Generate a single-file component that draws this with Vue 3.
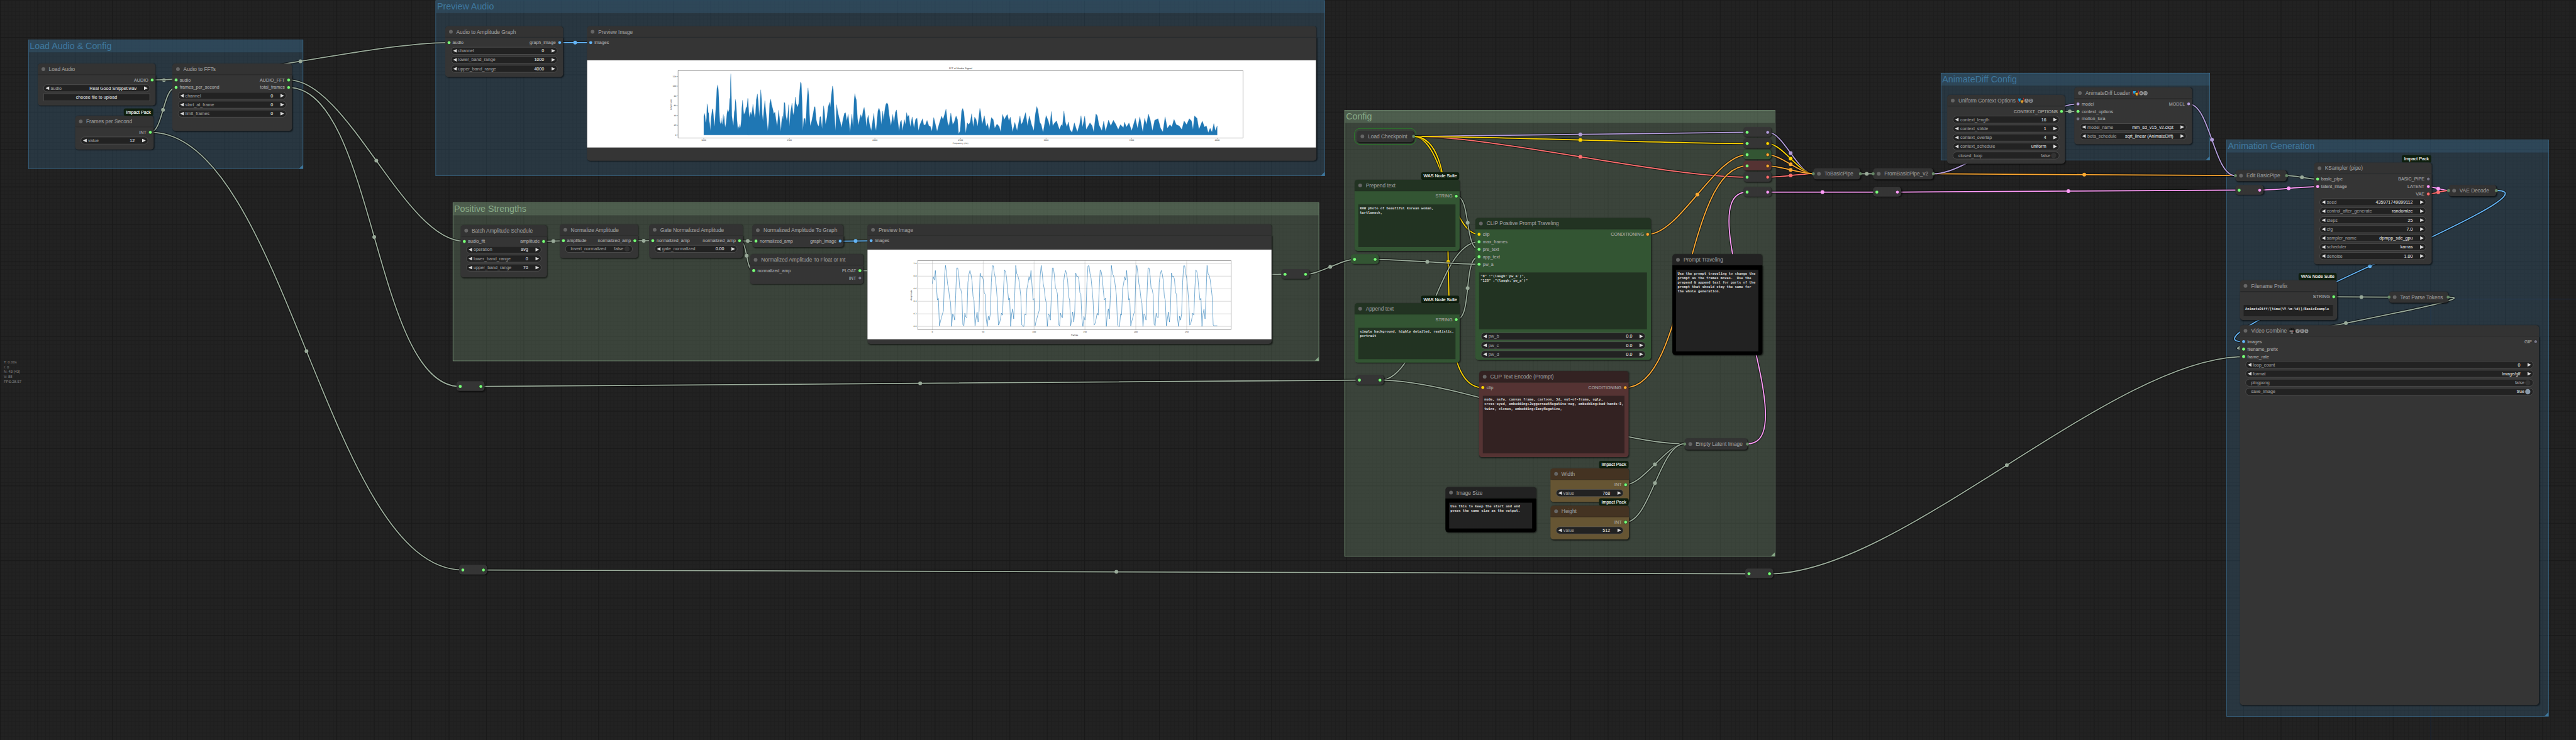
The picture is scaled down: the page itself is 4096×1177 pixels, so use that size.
<script setup>
const C = {
  any: '#7f7', off: '#778', link: '#9aab9a', image: '#64b5f6', clip: '#ffd500',
  model: '#b39ddb', vae: '#ff6e6e', latent: '#ff9cf9', cond: '#ffa931',
}

const groups = [
  { title: 'Load Audio & Config', x: 75.5, y: 106, w: 735, h: 346, color: '#3f789e' },
  { title: 'Preview Audio', x: 1165, y: 1, w: 2379, h: 470, color: '#3f789e' },
  { title: 'Positive Strengths', x: 1210.5, y: 542, w: 2317, h: 424, color: '#88aa88' },
  { title: 'Config', x: 3596, y: 295, w: 1152, h: 1194, color: '#88aa88' },
  { title: 'AnimateDiff Config', x: 5191, y: 195, w: 720, h: 234, color: '#3f789e' },
  { title: 'Animation Generation', x: 5955, y: 374, w: 862, h: 1543, color: '#3f789e' },
]

const num = (label, value) => ({ kind: 'num', label, value })
const toggle = (label, on) => ({ kind: 'toggle', label, value: on ? 'true' : 'false', on })
const inp = (label, color = C.any) => ({ label, color })
const out = inp

const nodes = {
  load: { title: 'Load Audio', x: 100.5, y: 200, w: 315, h: 82, outs: [out('AUDIO')],
    widgets: [num('audio', 'Real Good Snippet.wav'), { kind: 'button', label: 'choose file to upload' }] },
  fps: { title: 'Frames per Second', x: 200.5, y: 340, w: 210, h: 60, badge: 'Impact Pack', outs: [out('INT')],
    widgets: [num('value', '12')] },
  fft: { title: 'Audio to FFTs', x: 460.5, y: 200, w: 320, h: 150, ins: [inp('audio'), inp('frames_per_second')],
    outs: [out('AUDIO_FFT'), out('total_frames')],
    widgets: [num('channel', '0'), num('start_at_frame', '0'), num('limit_frames', '0')] },
  ampGraph: { title: 'Audio to Amplitude Graph', x: 1190.5, y: 100, w: 315, h: 106, ins: [inp('audio')],
    outs: [out('graph_image', C.image)],
    widgets: [num('channel', '0'), num('lower_band_range', '1000'), num('upper_band_range', '4000')] },
  prev1: { title: 'Preview Image', x: 1570, y: 100, w: 1951, h: 330, ins: [inp('images', C.image)] },
  batch: { title: 'Batch Amplitude Schedule', x: 1231.5, y: 631.5, w: 231, h: 110, ins: [inp('audio_fft')],
    outs: [out('amplitude')],
    widgets: [num('operation', 'avg'), num('lower_band_range', '0'), num('upper_band_range', '70')] },
  norm: { title: 'Normalize Amplitude', x: 1496.5, y: 630.3, w: 210, h: 60, ins: [inp('amplitude')],
    outs: [out('normalized_amp')], widgets: [toggle('invert_normalized', false)] },
  gate: { title: 'Gate Normalized Amplitude', x: 1736, y: 630.3, w: 251, h: 60, ins: [inp('normalized_amp')],
    outs: [out('normalized_amp')], widgets: [num('gate_normalized', '0.00')] },
  nGraph: { title: 'Normalized Amplitude To Graph', x: 2012, y: 631.3, w: 244, h: 30, ins: [inp('normalized_amp')],
    outs: [out('graph_image', C.image)] },
  nFloat: { title: 'Normalized Amplitude To Float or Int', x: 2006, y: 710.3, w: 303, h: 50, ins: [inp('normalized_amp')],
    outs: [out('FLOAT'), out('INT', C.off)] },
  prev2: { title: 'Preview Image', x: 2320, y: 630.3, w: 1081, h: 290, ins: [inp('images', C.image)] },
  rA: { reroute: 1, x: 1220.5, y: 1020, oc: C.any },
  rB: { reroute: 1, x: 1228, y: 1511, oc: C.any },
  rC: { reroute: 1, x: 4668, y: 1521, oc: C.any },
  rD: { reroute: 1, x: 3427, y: 720, oc: C.any },
  rE: { reroute: 1, x: 3613, y: 680, oc: C.any, tone: 'green' },
  rF: { reroute: 1, x: 3626, y: 1003, oc: C.any },
  ckpt: { title: 'Load Checkpoint', collapsed: 1, x: 3629, y: 350, w: 152, outs: [1], selected: 1 },
  prepend: { title: 'Prepend text', x: 3623, y: 510.5, w: 281, h: 160, tone: 'green', badge: 'WAS Node Suite',
    outs: [out('STRING')], text: 'RAW photo of beautiful korean woman,\nturtleneck,', th: 114 },
  append: { title: 'Append text', x: 3623, y: 840.5, w: 281, h: 129.5, tone: 'green', badge: 'WAS Node Suite',
    outs: [out('STRING')], text: 'simple background, highly detailed, realistic,\nportrait', th: 84 },
  clipPos: { title: 'CLIP Positive Prompt Traveling', x: 3946, y: 613, w: 470, h: 350, tone: 'green',
    ins: [inp('clip', C.clip), inp('max_frames'), inp('pre_text'), inp('app_text'), inp('pw_a')],
    outs: [out('CONDITIONING', C.cond)], text: '"0" :"(laugh:`pw_a`)",\n"128" :"(laugh:`pw_a`)"', th: 152,
    widgets: [num('pw_b', '0.0'), num('pw_c', '0.0'), num('pw_d', '0.0')] },
  note1: { title: 'Prompt Traveling', x: 4473, y: 710, w: 241, h: 240, tone: 'black', th: 218,
    text: 'Use the prompt traveling to change the\nprompt as the frames moves.  Use the\nprepend & append text for parts of the\nprompt that should stay the same for\nthe whole generation.' },
  clipNeg: { title: 'CLIP Text Encode (Prompt)', x: 3956, y: 1023, w: 400, h: 200, tone: 'red',
    ins: [inp('clip', C.clip)], outs: [out('CONDITIONING', C.cond)], th: 154,
    text: 'nude, nsfw, canvas frame, cartoon, 3d, out-of-frame, ugly,\ncross-eyed, embedding:JuggernautNegative-neg, embedding:bad-hands-5,\ntwins, clones, embedding:EasyNegative,' },
  width: { title: 'Width', x: 4146.5, y: 1282.7, w: 210, h: 60, tone: 'brown', badge: 'Impact Pack',
    outs: [out('INT')], widgets: [num('value', '768')] },
  height: { title: 'Height', x: 4146.5, y: 1383, w: 210, h: 60, tone: 'brown', badge: 'Impact Pack',
    outs: [out('INT')], widgets: [num('value', '512')] },
  note2: { title: 'Image Size', x: 3865.5, y: 1332.7, w: 243.5, h: 91.5, tone: 'black', th: 69,
    text: 'Use this to keep the start and end\nposes the same size as the output.' },
  empty: { title: 'Empty Latent Image', collapsed: 1, x: 4505.5, y: 1172.5, w: 168, ins: [1], outs: [1] },
  r1: { reroute: 1, x: 4663, y: 340, oc: C.model },
  r2: { reroute: 1, x: 4663, y: 370, oc: C.clip },
  r3: { reroute: 1, x: 4663, y: 400, oc: C.cond, tone: 'green' },
  r4: { reroute: 1, x: 4663, y: 430, oc: C.cond, tone: 'red' },
  r5: { reroute: 1, x: 4663, y: 460, oc: C.vae },
  r6: { reroute: 1, x: 4663, y: 500, oc: C.latent },
  r7: { reroute: 1, x: 5010, y: 500, oc: C.latent },
  r8: { reroute: 1, x: 5978.5, y: 494.5, oc: C.latent },
  toPipe: { title: 'ToBasicPipe', collapsed: 1, x: 4850, y: 450, w: 126, ins: [1], outs: [1] },
  fromPipe: { title: 'FromBasicPipe_v2', collapsed: 1, x: 5010, y: 450, w: 161, ins: [1], outs: [1] },
  ctx: { title: 'Uniform Context Options', icon: 'mask', letters: ['A', 'D'], x: 5208, y: 284.3, w: 315, h: 153.5,
    outs: [out('CONTEXT_OPTIONS')],
    widgets: [num('context_length', '16'), num('context_stride', '1'), num('context_overlap', '4'),
      num('context_schedule', 'uniform'), toggle('closed_loop', false)] },
  loader: { title: 'AnimateDiff Loader', icon: 'mask', letters: ['A', 'D'], x: 5548, y: 264.3, w: 315, h: 122,
    ins: [inp('model', C.model), inp('context_options'), inp('motion_lora', C.off)], outs: [out('MODEL', C.model)],
    widgets: [num('model_name', 'mm_sd_v15_v2.ckpt'), num('beta_schedule', 'sqrt_linear (AnimateDiff)')] },
  edit: { title: 'Edit BasicPipe', collapsed: 1, x: 5978.5, y: 454.7, w: 137, ins: [1], outs: [1] },
  ks: { title: 'KSampler (pipe)', x: 6188.5, y: 465.3, w: 315, h: 242, badge: 'Impact Pack',
    ins: [inp('basic_pipe'), inp('latent_image', C.latent)],
    outs: [out('BASIC_PIPE', C.off), out('LATENT', C.latent), out('VAE', C.vae)],
    widgets: [num('seed', '435971749899112'), num('control_after_generate', 'randomize'), num('steps', '25'),
      num('cfg', '7.0'), num('sampler_name', 'dpmpp_sde_gpu'), num('scheduler', 'karras'), num('denoise', '1.00')] },
  vaeDec: { title: 'VAE Decode', collapsed: 1, x: 6548.5, y: 494.7, w: 128, ins: [1], outs: [1] },
  file: { title: 'Filename Prefix', x: 5991, y: 780.3, w: 260, h: 76, badge: 'WAS Node Suite', outs: [out('STRING')],
    text: 'AnimateDiff/[time(%Y-%m-%d)]/BasicExample', th: 30 },
  parse: { title: 'Text Parse Tokens', collapsed: 1, x: 6390, y: 780, w: 158, ins: [1], outs: [1] },
  video: { title: 'Video Combine', icon: 'camera', letters: ['V', 'H', 'S'], x: 5991, y: 900.3, w: 800, h: 986,
    ins: [inp('images', C.image), inp('filename_prefix'), inp('frame_rate')], outs: [out('GIF', C.off)],
    widgets: [num('loop_count', '0'), num('format', 'image/gif'), toggle('pingpong', false), toggle('save_image', true)] },
}

const regular = Object.values(nodes).filter((n) => !n.reroute && !n.collapsed)
const collapsed = Object.values(nodes).filter((n) => n.collapsed)
const reroutes = Object.values(nodes).filter((n) => n.reroute)

function outPos(n, i) {
  if (n.reroute) return [n.x + 66, n.y + 14]
  if (n.collapsed) return [n.x + n.w, n.y + 15]
  return [n.x + n.w - 9, n.y + 14 + 20 * i]
}
function inPos(n, i) {
  if (n.reroute) return [n.x + 10, n.y + 14]
  if (n.collapsed) return [n.x, n.y + 15]
  return [n.x + 10, n.y + 14 + 20 * i]
}

const links = [
  ['load', 0, 'fft', 0, 'link'], ['load', 0, 'ampGraph', 0, 'link'], ['fps', 0, 'fft', 1, 'link'],
  ['fps', 0, 'rB', 0, 'link'], ['fft', 0, 'batch', 0, 'link'], ['fft', 1, 'rA', 0, 'link'],
  ['ampGraph', 0, 'prev1', 0, 'image'], ['rA', 0, 'rF', 0, 'link'], ['rB', 0, 'rC', 0, 'link'],
  ['rC', 0, 'video', 2, 'link'], ['batch', 0, 'norm', 0, 'link'], ['norm', 0, 'gate', 0, 'link'],
  ['gate', 0, 'nGraph', 0, 'link'], ['gate', 0, 'nFloat', 0, 'link'], ['nGraph', 0, 'prev2', 0, 'image'],
  ['nFloat', 0, 'rD', 0, 'link'], ['rD', 0, 'rE', 0, 'link'],
  ['ckpt', 0, 'r5', 0, 'vae'], ['ckpt', 0, 'r1', 0, 'model'], ['ckpt', 0, 'r2', 0, 'clip'],
  ['ckpt', 0, 'clipPos', 0, 'clip'], ['ckpt', 0, 'clipNeg', 0, 'clip'],
  ['rF', 0, 'clipPos', 1, 'link'], ['prepend', 0, 'clipPos', 2, 'link'], ['append', 0, 'clipPos', 3, 'link'],
  ['rE', 0, 'clipPos', 4, 'link'], ['rF', 0, 'empty', 0, 'link'], ['width', 0, 'empty', 0, 'link'],
  ['height', 0, 'empty', 0, 'link'], ['clipPos', 0, 'r3', 0, 'cond'], ['clipNeg', 0, 'r4', 0, 'cond'],
  ['empty', 0, 'r6', 0, 'latent'], ['r1', 0, 'toPipe', 0, 'model'], ['r2', 0, 'toPipe', 0, 'clip'],
  ['r5', 0, 'toPipe', 0, 'vae'], ['r3', 0, 'toPipe', 0, 'cond'], ['r4', 0, 'toPipe', 0, 'cond'],
  ['toPipe', 0, 'fromPipe', 0, 'link'], ['fromPipe', 0, 'edit', 0, 'cond'], ['fromPipe', 0, 'loader', 0, 'model'],
  ['loader', 0, 'edit', 0, 'model'], ['ctx', 0, 'loader', 1, 'link'], ['r6', 0, 'r7', 0, 'latent'],
  ['r7', 0, 'r8', 0, 'latent'], ['r8', 0, 'ks', 1, 'latent'], ['edit', 0, 'ks', 0, 'link'],
  ['ks', 1, 'vaeDec', 0, 'latent'], ['ks', 2, 'vaeDec', 0, 'vae'], ['vaeDec', 0, 'video', 0, 'image'],
  ['file', 0, 'parse', 0, 'link'], ['parse', 0, 'video', 1, 'link'],
].map(([a, i, b, j, c]) => {
  const [x1, y1] = outPos(nodes[a], i)
  const [x2, y2] = inPos(nodes[b], j)
  const d = Math.hypot(x2 - x1, y2 - y1) * 0.25
  return { d: `M${x1} ${y1}C${x1 + d} ${y1} ${x2 - d} ${y2} ${x2} ${y2}`, mx: (x1 + x2) / 2, my: (y1 + y2) / 2, color: C[c] }
})

const box = (n) => ({ left: n.x + 'px', top: n.y + 'px', width: n.w + 'px', height: n.h + 'px' })

const amp = [
  68, 79, 74, 89, 65, 42, 44.5, 1, 8, 14, 20, 25, 80, 97, 85, 68, 60, 45, 37, 0, 20, 18, 10, 50, 93, 93, 81, 61, 59, 51, 3, 1, 21, 15,
  14, 70, 83, 89, 83, 73, 48, 41, 1, 12, 23, 7, 25, 85, 79, 80, 75, 54, 51, 12, 0, 16, 10, 20, 70, 96.5, 96.5, 84, 77, 60, 40, 2, 5, 12,
  21, 18, 60, 90, 87, 77, 58, 42, 45, 0, 20, 28, 12, 50, 97, 84, 81, 75, 62, 48, 2, 0.5, 0, 20, 18, 60,
]
const ampLine = Array.from({ length: 281 }, (_, i) => {
  const v = i > 276 ? 1 : amp[i % amp.length]
  return `${(173.6 + i * 2.722).toFixed(1)},${(205.3 - v * 1.68).toFixed(1)}`
}).join(' ')
const freqTicks = [1000, 1500, 2000, 2500, 3000, 3500, 4000]
const ampTicks = [0, 20, 40, 60, 80, 100, 120]
const frameTicks = [0, 50, 100, 150, 200, 250]
const normTicks = ['0.0', '0.2', '0.4', '0.6', '0.8', '1.0']
const stats = ['T: 0.00s', 'I: 0', 'N: 43 [43]', 'V: 88', 'FPS:28.57']
</script>

<template>
  <div class="viewport">
    <div class="stage">
      <div class="origin"></div>
      <section v-for="g in groups" :key="g.title" class="group" :style="{ ...box(g), '--c': g.color }">
        <header>{{ g.title }}</header>
        <i class="grip"></i>
      </section>

      <svg class="links" width="6890" height="1980" viewBox="0 0 6890 1980">
        <g v-for="(l, i) in links" :key="i" fill="none">
          <path :d="l.d" stroke="#000" stroke-opacity=".5" stroke-width="7" />
          <path :d="l.d" :stroke="l.color" stroke-width="3" />
          <circle :cx="l.mx" :cy="l.my" r="5" :fill="l.color" />
        </g>
      </svg>

      <article v-for="(n, k) in regular" :key="k" class="node" :class="n.tone" :style="box(n)">
        <span v-if="n.badge" class="badge">{{ n.badge }}</span>
        <header class="title">
          <i class="dot"></i>
          <span>{{ n.title }}</span>
          <svg v-if="n.icon === 'mask'" class="emoji" viewBox="0 0 18 17">
            <path d="M1 3C0 8 1 11 3 14M16 1C18 5 17 8 16 12" stroke="#d22" stroke-width="1.6" fill="none" />
            <path d="M2 1.5Q6 3.5 10 1.5L10.5 7Q10 11.500 6.500 12Q2.500 10.500 2 7Z" fill="#2bb2ee" stroke="#111" stroke-width=".8" />
            <path d="M8 6.500Q12 8 16 6L16 11Q15 15.500 12.500 16Q9 15 8.300 11Z" fill="#fbb22d" stroke="#111" stroke-width=".8" />
            <path d="M4 5.500h1.500M7.500 5.500H9M4.500 9.500Q6.500 8 8 9.500M10 10h1.200M13 10h1.200M10.500 12.800Q12.500 14.300 14 12.500" stroke="#124" stroke-width=".8" fill="none" />
          </svg>
          <svg v-if="n.icon === 'camera'" class="emoji" viewBox="0 0 18 17">
            <circle cx="6" cy="3.500" r="2.800" fill="#333" stroke="#000" />
            <circle cx="12" cy="3.500" r="2.800" fill="#333" stroke="#000" />
            <rect x="2" y="6" width="12" height="6" rx="1" fill="#777" stroke="#000" />
            <rect x="11" y="8" width="3" height="2.500" fill="#a33" />
            <rect x="14" y="5.500" width="2.500" height="8" fill="#444" stroke="#000" />
            <rect x="5" y="12" width="8" height="4" fill="#bbb" stroke="#000" />
          </svg>
          <b v-for="c in n.letters" :key="c" class="ring">{{ c }}</b>
        </header>
        <div class="slots">
          <div class="col">
            <div v-for="s in n.ins || []" :key="s.label" class="slot in">
              <i :style="{ background: s.color }"></i><span>{{ s.label }}</span>
            </div>
          </div>
          <div class="col">
            <div v-for="s in n.outs || []" :key="s.label" class="slot out">
              <span>{{ s.label }}</span><i :style="{ background: s.color }"></i>
            </div>
          </div>
        </div>
        <div v-if="n.text" class="area" :style="{ height: n.th + 'px' }">{{ n.text }}</div>
        <div v-if="n.widgets" class="widgets" :class="{ after: n.text }">
          <div v-for="w in n.widgets" :key="w.label" class="widget" :class="w.kind">
            <svg v-if="w.kind === 'num'" width="10" height="10"><path d="M10 0L0 5L10 10Z" fill="#ddd" /></svg>
            <span class="label">{{ w.label }}</span>
            <span v-if="w.value" class="value" :class="{ dim: w.kind === 'toggle' && !w.on }">{{ w.value }}</span>
            <svg v-if="w.kind === 'num'" width="10" height="10"><path d="M0 0L10 5L0 10Z" fill="#ddd" /></svg>
            <i v-if="w.kind === 'toggle'" class="knob" :class="{ on: w.on }"></i>
          </div>
        </div>
      </article>

      <article v-for="n in collapsed" :key="n.title" class="mini" :class="{ selected: n.selected }"
        :style="{ left: n.x + 'px', top: n.y + 'px', width: n.w + 'px' }">
        <i v-if="n.ins" class="port left"></i>
        <i class="dot"></i><span>{{ n.title }}</span>
        <i v-if="n.outs" class="port right"></i>
      </article>

      <article v-for="(n, k) in reroutes" :key="'r' + k" class="reroute" :class="n.tone" :style="{ left: n.x + 'px', top: n.y + 'px' }">
        <i></i><i class="o" :style="{ background: n.oc }"></i>
      </article>

      <svg class="chart fft" width="1950" height="234" viewBox="1570 161 1950 234">
        <rect x="1570" y="161" width="1950" height="234" fill="#fff" />
        <g fill="#1f77b4" stroke="#1f77b4" stroke-width=".8">
          <path transform="translate(1150 0) scale(.57398 .33333)" d="M1276 1084L1276 937 1279 910 1282 928 1284 975 1286 986 1289 945 1291 832 1293 845 1295 868 1297 905 1299 907 1301 965 1304 995 1306 1048 1308 1000 1310 950 1313 910 1316 872 1319 880 1321 920 1324 990 1326 1016 1329 945 1332 865 1335 780 1337 712 1339 695 1341 680 1344 720 1346 780 1348 895 1351 975 1354 998 1357 948 1359 980 1362 1000 1365 950 1367 918 1369 965 1371 930 1373 985 1376 1022 1380 985 1384 910 1388 877 1391 900 1394 880 1397 788 1399 800 1400 668 1402 591 1403 675 1405 775 1407 930 1410 970 1414 1008 1418 900 1421 875 1423 796 1426 823 1428 868 1431 965 1435 1043 1438 1015 1441 1030 1444 995 1447 1025 1451 960 1453 870 1457 803 1460 870 1463 920 1467 905 1470 895 1473 857 1476 870 1479 825 1482 790 1482 1084Z" />
          <path transform="translate(2000 120) scale(.9949 .33333)" d="M0 724L0 430 2 500 4 585 7 540 9 565 12 530 14 478 16 530 19 590 21 545 23 440 26 393 28 450 31 577 33 480 35 360 37 430 39 560 41 613 43 540 46 447 48 515 51 600 54 690 57 600 59 470 62 435 64 480 67 510 70 555 73 540 76 600 79 657 81 600 83 525 86 600 89 697 91 620 93 570 95 600 98 460 100 470 102 560 105 610 107 580 110 480 112 655 115 540 119 468 122 565 125 530 128 418 130 470 134 500 137 470 140 360 142 297 144 310 146 450 148 690 151 592 154 590 156 645 159 450 162 345 164 400 166 560 168 652 172 610 176 550 179 500 181 495 184 600 187 635 191 655 194 580 196 575 200 675 202 560 204 488 206 530 209 638 213 580 216 500 220 460 222 500 225 400 228 330 230 360 232 500 234 610 236 690 239 480 242 540 246 590 249 620 252 665 256 600 260 550 263 545 266 612 270 557 273 640 275 705 280 555 283 660 286 440 288 391 290 425 292 442 295 590 298 645 301 590 304 560 307 590 310 530 313 502 316 560 319 660 321 600 324 565 327 630 332 690 336 610 339 550 342 650 345 690 350 530 353 507 356 540 359 640 363 530 365 600 367 560 369 512 371 480 374 465 377 478 380 560 385 650 390 558 393 630 397 540 400 522 403 600 407 695 410 620 413 605 416 690 421 600 424 640 427 543 430 580 433 565 437 660 442 578 447 670 451 600 455 587 459 690 463 640 470 592 473 640 477 645 482 606 487 650 491 655 495 695 500 583 504 630 509 695 515 630 521 572 525 600 529 560 533 515 537 620 541 650 546 547 551 640 555 620 560 570 564 600 567 715 571 690 575 530 578 510 581 540 586 710 590 625 594 640 598 620 602 552 606 660 610 580 614 600 618 655 624 510 626 537 630 640 636 568 641 655 645 630 649 690 655 583 660 600 664 670 670 635 676 655 680 700 685 558 690 600 694 575 698 558 702 610 706 580 712 700 718 622 724 690 732 570 735 640 739 620 747 543 752 650 757 570 763 640 769 690 773 560 777 495 780 520 785 620 789 640 794 705 802 567 808 610 812 660 816 535 820 650 824 630 830 610 838 680 843 640 846 650 850 530 854 620 858 660 862 618 866 680 872 705 878 625 886 700 892 640 896 568 900 660 906 572 910 680 920 625 926 650 930 700 936 553 940 570 944 640 952 690 957 612 962 695 970 604 976 650 983 605 990 640 996 680 1002 640 1010 665 1013 620 1018 660 1025 626 1032 690 1037 640 1042 590 1048 670 1054 577 1062 700 1067 590 1072 640 1077 555 1082 600 1088 690 1094 605 1103 592 1110 670 1116 698 1122 577 1128 670 1135 640 1140 660 1146 598 1152 640 1160 650 1167 680 1173 610 1180 640 1187 592 1193 610 1197 680 1201 570 1208 590 1213 680 1222 612 1228 660 1233 650 1238 705 1243 670 1248 700 1253 632 1257 690 1262 650 1262 724Z" />
        </g>
        <rect x="1813.500" y="189.500" width="1511.500" height="180" fill="none" stroke="#444" stroke-width=".8" />
        <g stroke="#333" stroke-width=".6">
          <path v-for="(t, i) in freqTicks" :key="t" :d="`M${1882.4 + i * 228.87} 369.500v2.500`" />
          <path v-for="(t, i) in ampTicks" :key="t" :d="`M1813.500 ${361.3 - i * 26.17}h-3.500`" />
        </g>
        <g class="ct" font-size="5.200">
          <text v-for="(t, i) in freqTicks" :key="t" :x="1882.4 + i * 228.87" y="377.600" text-anchor="middle">{{ t }}</text>
          <text v-for="(t, i) in ampTicks" :key="t" x="1809" :y="363.2 - i * 26.17" text-anchor="end">{{ t }}</text>
          <text x="2548" y="385" textLength="42">Frequency (Hz)</text>
          <text transform="translate(1796 294) rotate(-90)" textLength="28">Amplitude</text>
          <text x="2538.500" y="185.500" font-size="6.300" textLength="62">FFT of Audio Signal</text>
        </g>
      </svg>

      <svg class="chart norm" width="1081" height="240" viewBox="0 0 1081 240">
        <rect width="1081" height="240" fill="#fff" />
        <g stroke="#b0b0b0" stroke-width=".8">
          <path v-for="(t, i) in frameTicks" :key="t" :d="`M${173.6 + i * 136.1} 29V214`" />
          <path v-for="(t, i) in normTicks" :key="t" :d="`M135.300 ${205.3 - i * 33.6}H973`" />
        </g>
        <polyline :points="ampLine" fill="none" stroke="#1f77b4" stroke-width="1" />
        <rect x="135.300" y="29" width="837.700" height="185" fill="none" stroke="#444" stroke-width=".8" />
        <g class="ct" font-size="5.200">
          <text v-for="(t, i) in frameTicks" :key="t" :x="173.6 + i * 136.1" y="222" text-anchor="middle">{{ t }}</text>
          <text v-for="(t, i) in normTicks" :key="t" x="131.500" :y="207.2 - i * 33.6" text-anchor="end">{{ t }}</text>
          <text x="554" y="229.500" text-anchor="middle">Frames</text>
          <text transform="translate(118.500 135.500) rotate(-90)" textLength="28">Amplitude</text>
        </g>
      </svg>

      <div class="stats"><span v-for="s in stats" :key="s">{{ s }}</span></div>
    </div>
  </div>
</template>

<style>
body { margin: 0; background: #222; overflow: hidden; }
</style>

<style scoped>
.viewport { width: 4096px; height: 1177px; overflow: hidden; background: #222; }
.stage {
  position: relative; width: 6890px; height: 1980px; transform: scale(0.594485); transform-origin: 0 0;
  font-family: "Liberation Sans", Arial, sans-serif; font-size: 12px; color: #aaa;
  background-color: #222;
  background-image:
    linear-gradient(90deg, #191919 2px, transparent 2px), linear-gradient(#191919 2px, transparent 2px),
    linear-gradient(90deg, #1e1e1e 1px, transparent 1px), linear-gradient(#1e1e1e 1px, transparent 1px);
  background-size: 100px 100px, 100px 100px, 10px 10px, 10px 10px;
  background-position: 0 -1px, 0 -1px, 1px 0, 1px 0;
}
i { display: block; font-style: normal; }
.origin { position: absolute; left: 6501px; top: 800px; width: 400px; height: 1200px; border: 1px solid #235; box-sizing: border-box; }
.group { position: absolute; box-sizing: border-box; border: 1px solid var(--c); background: color-mix(in srgb, var(--c) 25%, transparent); }
.group header {
  height: 33px; padding-left: 3px; line-height: 31px; font-size: 24px; color: var(--c); white-space: nowrap;
  background: color-mix(in srgb, var(--c) 25%, transparent);
}
.grip { position: absolute; right: 0; bottom: 0; border: 5px solid transparent; border-right-color: var(--c); border-bottom-color: var(--c); }
.links { position: absolute; left: 0; top: 0; }
.node {
  --t: #333; --b: #353535; --a: #222;
  position: absolute; background: var(--b); border-radius: 0 0 8px 8px; box-shadow: 2px 2px 3px rgba(0, 0, 0, .5);
  -webkit-text-stroke: .2px currentColor;
}
.reroute { --b: #353535; }
.green { --t: #232; --b: #353; --a: #232; }
.red { --t: #322; --b: #533; --a: #322; }
.brown { --t: #432; --b: #653; }
.black { --t: #222; --b: #000; }
.title {
  position: absolute; left: 0; right: 0; bottom: 100%; height: 30px; box-sizing: border-box; padding-left: 10px;
  display: flex; align-items: center; border-radius: 8px 8px 0 0; background: var(--t); color: #999;
  font-size: 14px; line-height: 30px; white-space: nowrap; box-shadow: inset 0 -1px rgba(0, 0, 0, .2), 2px 0 3px -1px rgba(0, 0, 0, .4);
}
.dot { flex: none; width: 10px; height: 10px; margin-right: 10px; border-radius: 50%; background: #666; }
.emoji { width: 18px; height: 17px; margin: 0 1px 0 5px; }
.ring {
  width: 10.500px; height: 10.500px; margin-right: 1.200px; border-radius: 50%; background: #999; color: #333;
  font-size: 8.500px; font-weight: 400; line-height: 10.500px; text-align: center;
}
.badge {
  position: absolute; right: 1px; bottom: calc(100% + 30px); height: 20px; padding: 0 6px; border-radius: 5px;
  background: #0f1f0f; color: #fff; line-height: 20px; white-space: nowrap;
}
.slots { display: flex; justify-content: space-between; padding-top: 4px; }
.slot { display: flex; align-items: center; height: 20px; line-height: 21px; white-space: nowrap; }
.slot i { width: 8px; height: 8px; border-radius: 50%; }
.slot span { padding-top: 1px; }
.in { padding-left: 6px; gap: 6px; }
.out { justify-content: flex-end; padding-right: 4px; gap: 5px; }
.out i { border: 1px solid #111; }
.area {
  margin: 12px 11px 0 10px; padding: 4px 4px 0; box-sizing: border-box; background: var(--a); color: #ddd;
  font: bold 9.100px/12px "DejaVu Sans Mono", monospace; white-space: pre; overflow: hidden; -webkit-text-stroke: 0;
}
.black .area { margin-top: 8px; }
.widgets { display: flex; flex-direction: column; gap: 4px; padding: 2px 15px 0; }
.widgets.after { padding-top: 9px; }
.widget {
  display: flex; align-items: center; height: 20px; box-sizing: border-box; padding: 0 5px; border: 1px solid #606060;
  border-radius: 10px; background: #222; line-height: 18px; white-space: nowrap; color: #999;
}
.label { margin-left: 4px; flex: 1; }
.value { margin-right: 19px; color: #ddd; }
.value.dim { color: #999; }
.toggle { padding-left: 10px; padding-right: 7px; }
.toggle .value { margin-right: 2px; }
.knob { width: 14px; height: 14px; border-radius: 50%; background: #333; }
.knob.on { background: #89a; }
.button { border-radius: 0; justify-content: center; text-align: center; color: #ddd; }
.button .label { margin: 0; }
.mini {
  position: absolute; display: flex; align-items: center; height: 30px; box-sizing: border-box; padding-left: 10px;
  border-radius: 8px; background: #333; color: #999; font-size: 14px; white-space: nowrap; box-shadow: 2px 2px 3px rgba(0, 0, 0, .6);
  -webkit-text-stroke: .2px currentColor;
}
.mini.selected::after { content: ""; position: absolute; inset: -7px; border: 1.700px solid #1fa51f; border-radius: 16px; }
.port { position: absolute; top: 11px; width: 8px; height: 8px; border-radius: 50%; background: #686; }
.port.left { left: -4px; }
.port.right { right: -4px; }
.reroute {
  position: absolute; display: flex; justify-content: space-between; align-items: center; width: 75px; height: 26px; padding: 2px 5px 0 6px;
  box-sizing: border-box; border-radius: 8px; background: var(--b); box-shadow: 2px 2px 3px rgba(0, 0, 0, .5);
}
.reroute i { width: 8px; height: 8px; border-radius: 50%; background: #7f7; }
.reroute .o { border: 1px solid #111; }
.chart { position: absolute; }
.chart.fft { left: 1570px; top: 161px; }
.chart.norm { left: 2320px; top: 668px; }
.ct { font-family: "DejaVu Sans", sans-serif; fill: #222; }
.stats { position: absolute; left: 10px; top: 962px; display: flex; flex-direction: column; font-size: 10px; line-height: 13px; color: #888; }
</style>
